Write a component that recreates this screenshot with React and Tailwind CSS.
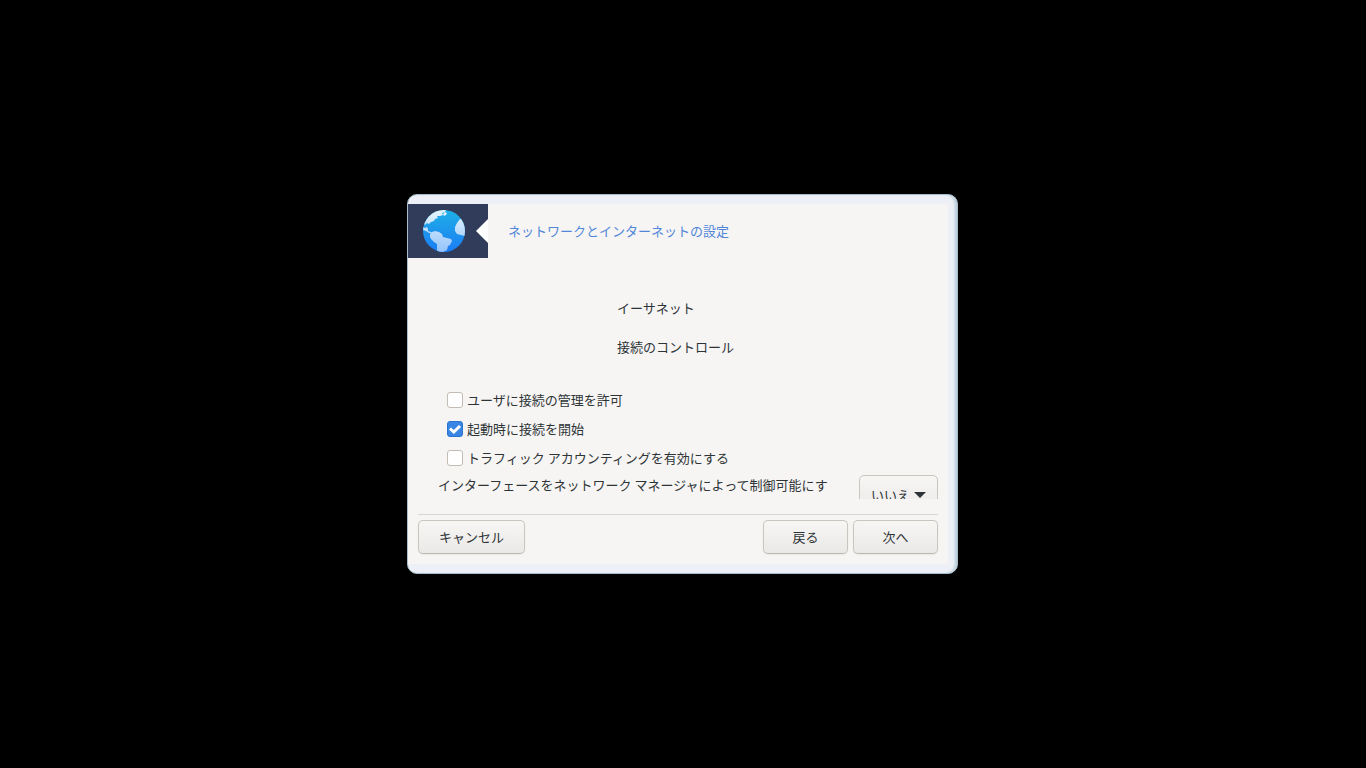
import { useState } from "react";

const options = [
  { id: "users", label: "ユーザに接続の管理を許可", checked: false },
  { id: "boot", label: "起動時に接続を開始", checked: true },
  { id: "accounting", label: "トラフィック アカウンティングを有効にする", checked: false },
];

function Globe() {
  return (
    <svg viewBox="0 0 42 42" className="h-[42px] w-[42px]" aria-hidden="true">
      <defs>
        <linearGradient id="sea" x1="0" y1="0" x2="0" y2="1">
          <stop offset="0" stopColor="#1fb0e6" />
          <stop offset="1" stopColor="#1b7cf5" />
        </linearGradient>
        <linearGradient id="land" x1="0" y1="0" x2="0" y2="42" gradientUnits="userSpaceOnUse">
          <stop offset="0" stopColor="#e6f6fc" />
          <stop offset="1" stopColor="#94c3fc" />
        </linearGradient>
        <clipPath id="disc">
          <circle cx="21" cy="21" r="21" />
        </clipPath>
      </defs>
      <g clipPath="url(#disc)">
        <rect width="42" height="42" fill="url(#sea)" />
        <g fill="url(#land)">
          <path d="M1 14 L3 8 L9 2 L15 0 L23 0 L22 2 L19 3 L20 5 L17 6 L14 6 L15 8 L12 9 L11 11 L8 12 L6 14 L4 13 L2 15 Z" />
          <path d="M20 4 L22 2 L24 3 L23 5 L21 6 Z" />
          <path d="M0 17 L2 18 L4 17 L5 19 L5 21 L8 22 L9 23 L6 23 L3 21 L0 20 Z" />
          <path d="M7 24 L9 22 L12 21 L16 22 L19 24 L20 27 L24 28 L28 29 L29 31 L27 35 L25 36 L24 40 L20 42 L15 42 L14 40 L14 34 L11 32 L8 29 L7 27 Z" />
          <path d="M42 9 L37 9 L34 13 L32 17 L32 21 L34 24 L38 25 L42 26 Z" />
        </g>
      </g>
    </svg>
  );
}

function DialogButton({ children, className }) {
  return (
    <button
      type="button"
      className={`h-[34px] rounded-[5px] border border-[#c9c5bf] border-b-[#bcb7af] bg-linear-to-b from-[#f7f6f5] to-[#ebe9e8] shadow-xs ${className}`}
    >
      {children}
    </button>
  );
}

export default function App() {
  const [items, setItems] = useState(options);
  const [controlled, setControlled] = useState("no");

  const toggle = (id) => {
    setItems((prev) => prev.map((o) => (o.id === id ? { ...o, checked: !o.checked } : o)));
  };

  return (
    <div className="flex min-h-screen items-center justify-center bg-black pr-px font-['Noto_Sans_CJK_JP',sans-serif] text-[13px] leading-5 text-[#2e3436]">
      <main className="w-full max-w-[551px] rounded-[10px] border border-[#a9bccb] bg-[#edf1f7] pt-[9px] pr-[9px] pb-[9px] shadow-[inset_-3px_0_3px_-1px_#b4cad9]">
        <div className="bg-[#f6f5f4]">
          <header className="flex items-center gap-5">
            <div className="flex h-[54px] w-20 items-center justify-between bg-[#303c59] pl-[15px]">
              <Globe />
              <svg viewBox="0 0 12 24" className="h-6 w-3" aria-hidden="true">
                <path d="M12 0 L0 12 L12 24 Z" fill="#fff" />
              </svg>
            </div>
            <h1 className="text-[#5087d9]">ネットワークとインターネットの設定</h1>
          </header>

          <form className="px-[10px] pb-[10px]">
            <div className="max-h-[241px] overflow-hidden pl-5">
              <div className="flex flex-col items-start gap-[19px] pt-10 pl-[179px]">
                <h2>イーサネット</h2>
                <h2>接続のコントロール</h2>
              </div>

              <div className="flex flex-col gap-[9px] pt-[33px] pl-[9px]">
                {items.map((o) => (
                  <label key={o.id} htmlFor={o.id} className="flex items-center gap-1">
                    <span className="grid h-4 w-4">
                      <input
                        id={o.id}
                        type="checkbox"
                        checked={o.checked}
                        onChange={() => toggle(o.id)}
                        className="col-start-1 row-start-1 h-4 w-4 appearance-none rounded-[3px] border border-[#c3bcb4] bg-white checked:border-[#2b73cc] checked:bg-[#3a86e4]"
                      />
                      {o.checked && (
                        <svg viewBox="0 0 16 16" className="pointer-events-none col-start-1 row-start-1 h-4 w-4" aria-hidden="true">
                          <path d="M3 7.5 L6.8 11 L13 5" fill="none" stroke="#fff" strokeWidth="3" />
                        </svg>
                      )}
                    </span>
                    {o.label}
                  </label>
                ))}
              </div>

              <div className="flex items-start justify-between pt-[7px]">
                <label htmlFor="controlled">
                  インターフェースをネットワーク マネージャによって制御可能にす
                </label>
                <span className="grid">
                  <select
                    id="controlled"
                    value={controlled}
                    onChange={(e) => setControlled(e.target.value)}
                    className="col-start-1 row-start-1 h-10 w-[79px] appearance-none rounded-[5px] border border-[#c9c5bf] bg-linear-to-b from-[#f7f6f5] to-[#ebe9e8] pl-[11px]"
                  >
                    <option value="no">いいえ</option>
                  </select>
                  <svg
                    viewBox="0 0 12 6"
                    className="pointer-events-none col-start-1 row-start-1 mr-3 h-[6px] w-3 self-center justify-self-end"
                    aria-hidden="true"
                  >
                    <path d="M0 0 H12 L6 6 Z" fill="#2e3436" />
                  </svg>
                </span>
              </div>
            </div>

            <footer className="mt-[15px] flex gap-[5px] border-t border-[#d9d7d5] pt-[5px]">
              <DialogButton className="mr-auto w-[107px]">キャンセル</DialogButton>
              <DialogButton className="w-[85px]">戻る</DialogButton>
              <DialogButton className="w-[85px]">次へ</DialogButton>
            </footer>
          </form>
        </div>
      </main>
    </div>
  );
}
